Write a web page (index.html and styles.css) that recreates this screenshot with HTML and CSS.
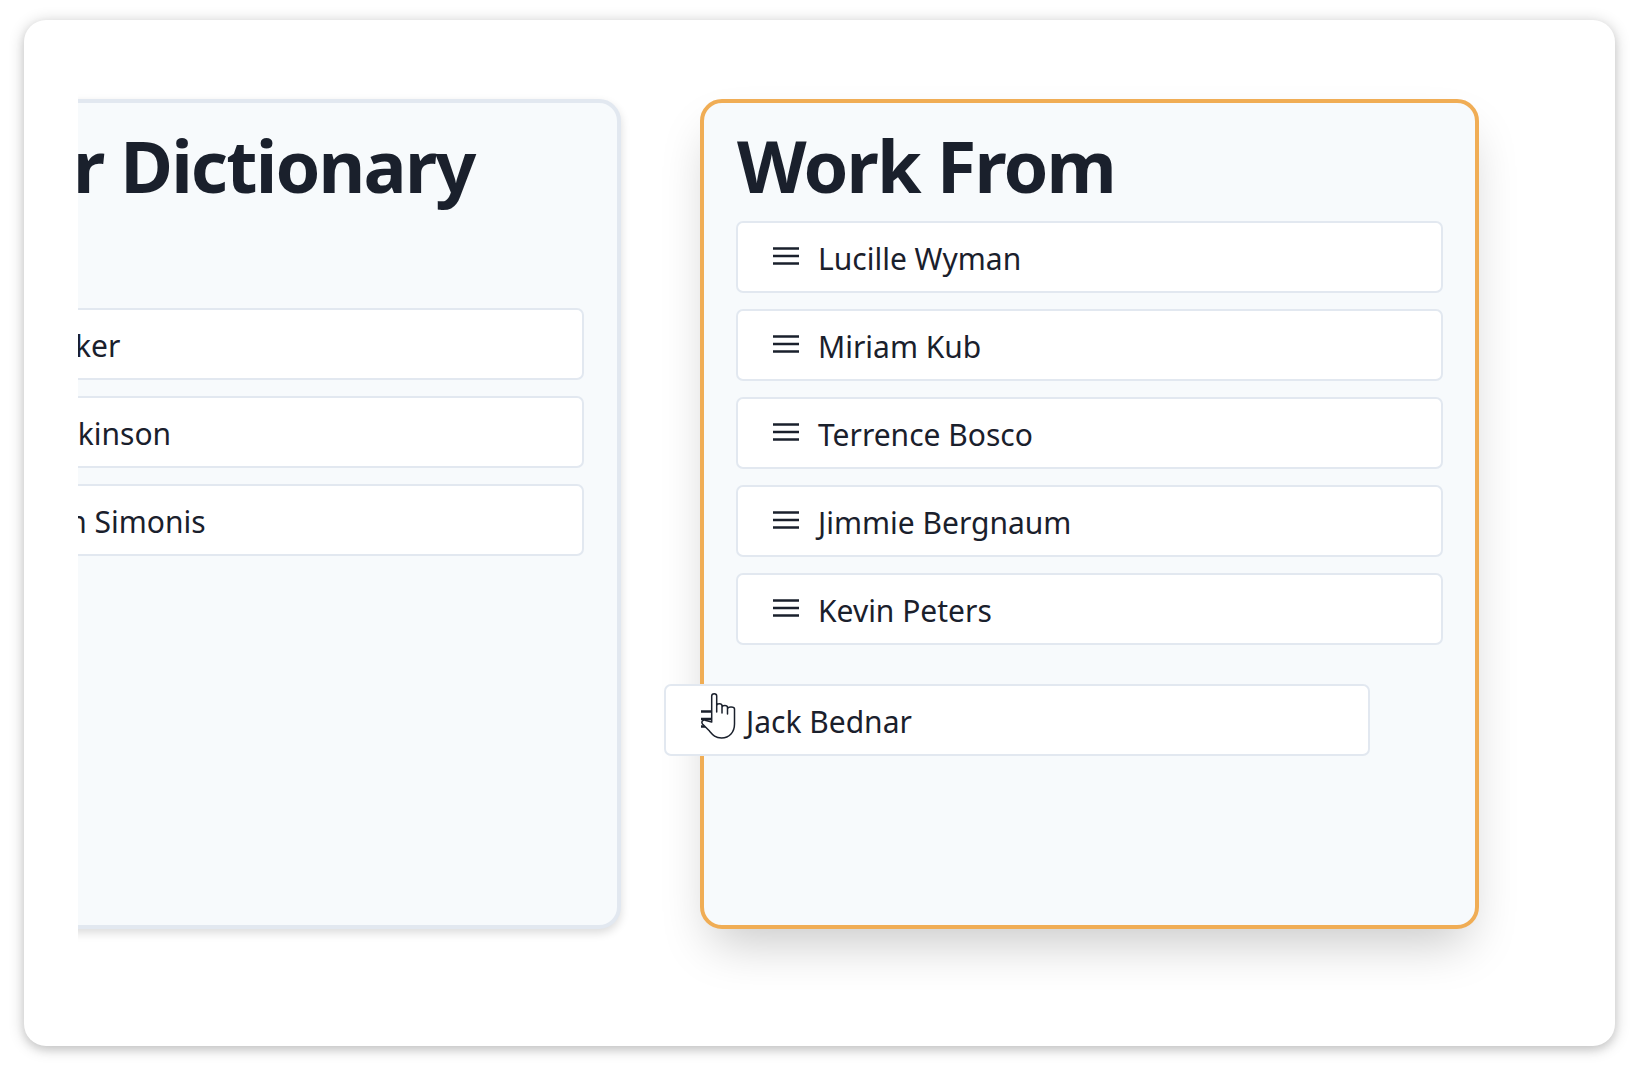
FILE: index.html
```html
<!DOCTYPE html>
<html lang="en">
<head>
<meta charset="utf-8">
<title>Drag and drop lists</title>
<link rel="stylesheet" href="styles.css">
</head>
<body>
<main class="card">
  <div class="board">
    <section class="panel panel-left">
      <h2 class="title">Server Dictionary</h2>
      <ul class="list list-offset">
        <li class="item"><svg class="menu" viewBox="0 0 26 18"><path d="M0 1.5H26M0 9H26M0 16.5H26"/></svg><span>Tina Parker</span></li>
        <li class="item"><svg class="menu" viewBox="0 0 26 18"><path d="M0 1.5H26M0 9H26M0 16.5H26"/></svg><span>Ruth Wilkinson</span></li>
        <li class="item"><svg class="menu" viewBox="0 0 26 18"><path d="M0 1.5H26M0 9H26M0 16.5H26"/></svg><span>Maureen Simonis</span></li>
      </ul>
    </section>
    <section class="panel panel-active">
      <h2 class="title">Work From</h2>
      <ul class="list">
        <li class="item"><svg class="menu" viewBox="0 0 26 18"><path d="M0 1.5H26M0 9H26M0 16.5H26"/></svg><span>Lucille Wyman</span></li>
        <li class="item"><svg class="menu" viewBox="0 0 26 18"><path d="M0 1.5H26M0 9H26M0 16.5H26"/></svg><span>Miriam Kub</span></li>
        <li class="item"><svg class="menu" viewBox="0 0 26 18"><path d="M0 1.5H26M0 9H26M0 16.5H26"/></svg><span>Terrence Bosco</span></li>
        <li class="item"><svg class="menu" viewBox="0 0 26 18"><path d="M0 1.5H26M0 9H26M0 16.5H26"/></svg><span>Jimmie Bergnaum</span></li>
        <li class="item"><svg class="menu" viewBox="0 0 26 18"><path d="M0 1.5H26M0 9H26M0 16.5H26"/></svg><span>Kevin Peters</span></li>
      </ul>
    </section>
  </div>
  <div class="item item-dragged">
    <svg class="menu" viewBox="0 0 26 18"><path d="M0 1.5H26M0 9H26M0 16.5H26"/></svg><span>Jack Bednar</span>
    <svg class="hand" viewBox="0 0 35 46"><path d="M10.7 29V3C10.7 0 15.7 0 15.7 3V19V12.8C15.7 10 21 10 21 12.8V20V14.5C21 11.8 26.5 11.8 26.5 14.5V21V16C26.5 13.2 33.5 13.2 33.5 16V31C33.5 39 28.5 45 20.5 45C14 45 11.5 41.5 8 37.5L1.5 31C-.3 28.5 2.6 26 5 27.5Z"/></svg>
  </div>
</main>
</body>
</html>
```

FILE: styles.css
```css
* { box-sizing: border-box; }
html, body { margin: 0; padding: 0; background: #fff; }
body {
  width: 1639px;
  height: 1074px;
  padding: 20px 24px 28px;
  font-family: "Noto Sans", "Open Sans", sans-serif;
  color: #1a202c;
  overflow: hidden;
}
.card {
  position: relative;
  width: 1591px;
  height: 1026px;
  padding-left: 54px;
  background: #fff;
  border-radius: 22px;
  box-shadow: 0 2px 16px rgba(0, 0, 0, .2), 0 4px 8px rgba(0, 0, 0, .1);
}
.board {
  display: flex;
  gap: 79px;
  height: 970px;
  padding-top: 79px;
  overflow: hidden;
}
.panel {
  flex: none;
  width: 779px;
  height: 830px;
  padding: 15px 32px 0;
  background: #f7fafc;
  border: 4px solid #e2e8f0;
  border-radius: 22px;
}
.panel-left {
  margin-left: -236px;
  padding-right: 33px;
  box-shadow: 0 4px 10px rgba(0, 0, 0, .14);
}
.panel-active {
  border-color: #f0ad55;
  box-shadow: 0 25px 50px -12px rgba(0, 0, 0, .22);
}
.title {
  margin: 0;
  height: 103px;
  padding: 2px 0 0 1px;
  font-size: 72px;
  line-height: 90px;
  font-weight: 700;
  letter-spacing: -1.8px;
  white-space: nowrap;
}
.panel-left .title { padding-left: 5px; }
.list {
  display: flex;
  flex-direction: column;
  gap: 16px;
  margin: 0;
  padding: 0;
  list-style: none;
}
.list-offset { padding-top: 87px; }
.item {
  display: flex;
  align-items: center;
  gap: 19px;
  height: 72px;
  padding-left: 35px;
  background: #fff;
  border: 2px solid #e2e8f0;
  border-radius: 7px;
  font-size: 30px;
  white-space: nowrap;
}
.item span { margin-top: 2px; }
.menu {
  flex: none;
  width: 26px;
  height: 18px;
  margin-bottom: 3px;
  fill: none;
  stroke: #1a202c;
  stroke-width: 2.6;
}
.item-dragged {
  position: absolute;
  left: 640px;
  top: 664px;
  width: 706px;
}
.hand {
  position: absolute;
  left: 35px;
  top: 7px;
  width: 35px;
  height: 46px;
  fill: #fff;
  stroke: #1a202c;
  stroke-width: 1.5;
  stroke-linejoin: round;
}
```
